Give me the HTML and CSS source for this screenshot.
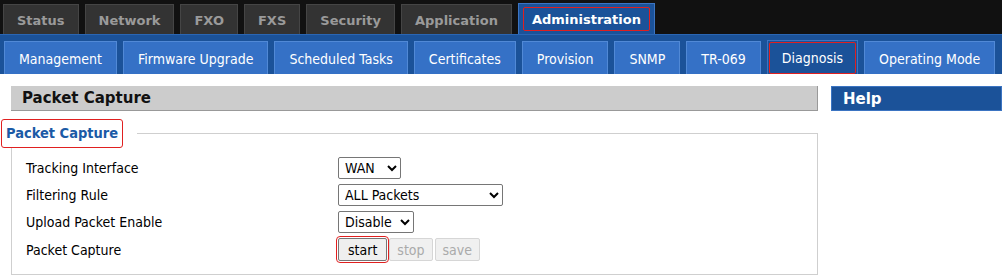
FILE: index.html
```html
<!DOCTYPE html>
<html>
<head>
<meta charset="utf-8">
<title>Packet Capture</title>
<link rel="stylesheet" href="styles.css">
</head>
<body>
<div class="topnav">
  <div class="tab"><span class="tab-in">Status</span></div>
  <div class="tab"><span class="tab-in">Network</span></div>
  <div class="tab"><span class="tab-in">FXO</span></div>
  <div class="tab"><span class="tab-in">FXS</span></div>
  <div class="tab"><span class="tab-in">Security</span></div>
  <div class="tab"><span class="tab-in">Application</span></div>
  <div class="tab tab-active"><span class="tab-in">Administration</span></div>
</div>
<div class="subnav">
  <div class="sub"><span class="sub-in">Management</span></div>
  <div class="sub"><span class="sub-in">Firmware Upgrade</span></div>
  <div class="sub"><span class="sub-in">Scheduled Tasks</span></div>
  <div class="sub"><span class="sub-in">Certificates</span></div>
  <div class="sub"><span class="sub-in">Provision</span></div>
  <div class="sub"><span class="sub-in">SNMP</span></div>
  <div class="sub"><span class="sub-in">TR-069</span></div>
  <div class="sub sub-active"><span class="sub-in">Diagnosis</span></div>
  <div class="sub"><span class="sub-in">Operating Mode</span></div>
</div>
<div class="content">
  <div class="main">
    <div class="section-head">Packet Capture</div>
    <fieldset class="group">
      <legend class="group-legend"><span class="legend-in">Packet Capture</span></legend>
      <div class="form">
        <label class="form-label">Tracking Interface</label>
        <div class="form-field">
          <select class="sel sel-wan"><option>WAN</option><option>LAN</option></select>
        </div>
        <label class="form-label">Filtering Rule</label>
        <div class="form-field">
          <select class="sel sel-rule"><option>ALL Packets</option></select>
        </div>
        <label class="form-label">Upload Packet Enable</label>
        <div class="form-field">
          <select class="sel sel-upload"><option>Disable</option><option>Enable</option></select>
        </div>
        <label class="form-label">Packet Capture</label>
        <div class="form-field buttons">
          <button class="btn btn-focus">start</button>
          <button class="btn" disabled>stop</button>
          <button class="btn" disabled>save</button>
        </div>
      </div>
    </fieldset>
  </div>
  <div class="side">
    <div class="help-head">Help</div>
  </div>
</div>
</body>
</html>
```
FILE: styles.css
```css
html, body {
  margin: 0;
  padding: 0;
  background: #fff;
  font-family: "DejaVu Sans Condensed", "DejaVu Sans", sans-serif;
  font-size: 14px;
  color: #000;
}

.topnav {
  height: 34px;
  background: #111;
  display: flex;
  align-items: flex-end;
  gap: 6px;
  padding-left: 3px;
  box-sizing: border-box;
}

.tab {
  flex: none;
  white-space: nowrap;
  height: 30px;
  box-sizing: border-box;
  background: #333;
  border: 1px solid #454545;
  border-bottom: none;
  padding: 3px 4px 2px;
  display: flex;
  font-family: "DejaVu Sans", sans-serif;
  font-weight: bold;
  font-size: 13px;
  color: #9a9a9a;
}

.tab-in {
  display: flex;
  align-items: center;
  padding: 0 8px;
  border: 1px solid transparent;
  border-radius: 2px;
}

.tab-active {
  height: 31px;
  padding: 3px 4px 3px;
  background: #1b5299;
  border-color: #3b74c2;
  color: #fff;
}

.tab-active .tab-in {
  border-color: #e02020;
}

.subnav {
  height: 40px;
  box-sizing: border-box;
  background: #1b5299;
  border-top: 1px solid #2a66b4;
  padding: 6px 0 0 4px;
  display: flex;
  align-items: flex-end;
  gap: 6px;
}

.sub {
  flex: none;
  white-space: nowrap;
  height: 33px;
  box-sizing: border-box;
  background: #3571c6;
  border: 1px solid #5189d6;
  border-bottom: none;
  padding: 1px 1px 0;
  display: flex;
  color: #fff;
}

.sub-in {
  display: flex;
  align-items: center;
  padding: 0 12px;
  border: 1px solid transparent;
  border-radius: 2px;
}

.sub-active {
  height: 34px;
  background: #1b5299;
  border-color: #3b74c2;
}

.sub-active .sub-in {
  border-color: #e02020;
}

.content {
  display: flex;
  margin-top: 12px;
  gap: 13px;
}

.main {
  margin-left: 11px;
  width: 807px;
  flex: none;
}

.side {
  flex: 1;
}

.section-head {
  height: 25px;
  box-sizing: border-box;
  background: #cccccc;
  border-right: 1px solid #999;
  border-bottom: 1px solid #999;
  padding-left: 11px;
  display: flex;
  align-items: center;
  font-family: "DejaVu Sans", sans-serif;
  font-weight: bold;
  font-size: 15px;
  color: #111;
}

.help-head {
  height: 25px;
  box-sizing: border-box;
  background: #1b5299;
  border: 1px solid #3b74c2;
  padding-left: 11px;
  display: flex;
  align-items: center;
  font-family: "DejaVu Sans", sans-serif;
  font-weight: bold;
  font-size: 15px;
  color: #fff;
}

.group {
  margin: 8px 0 0;
  padding: 0;
  border: 1px solid #cfcfcf;
  min-width: 0;
}

.group-legend {
  margin-left: -11px;
  padding: 0 14px 0 0;
}

.legend-in {
  display: block;
  padding: 5px 4px;
  border: 1px solid #e02020;
  border-radius: 3px;
  font-weight: bold;
  font-size: 14.5px;
  color: #1b5aa6;
  line-height: 17px;
}

.form {
  display: grid;
  grid-template-columns: 312px 1fr;
  row-gap: 5px;
  padding: 9px 0 13px 14px;
  align-items: center;
}

.form-label {
  line-height: 16px;
}

.form-field {
  display: flex;
  align-items: center;
}

.sel {
  height: 22px;
  font-family: "DejaVu Sans Condensed", "DejaVu Sans", sans-serif;
  font-size: 14px;
  color: #000;
  background: #fff;
  border: 1px solid #767676;
  border-radius: 2px;
  padding: 0 2px;
}

.sel-wan { width: 63px; }
.sel-rule { width: 165px; }
.sel-upload { width: 76px; }

.buttons {
  gap: 2px;
}

.btn {
  height: 23px;
  font-family: "DejaVu Sans Condensed", "DejaVu Sans", sans-serif;
  font-size: 14px;
  color: #000;
  background: #efefef;
  border: 1px solid #767676;
  border-radius: 2px;
  padding: 0 9px;
}

.btn:disabled {
  color: #aaa;
  background: #f0f0f0;
  border-color: #d6d6d6;
  padding: 0 7px;
}

.btn-focus {
  outline: 1px solid #e02020;
  outline-offset: 1px;
}
```
